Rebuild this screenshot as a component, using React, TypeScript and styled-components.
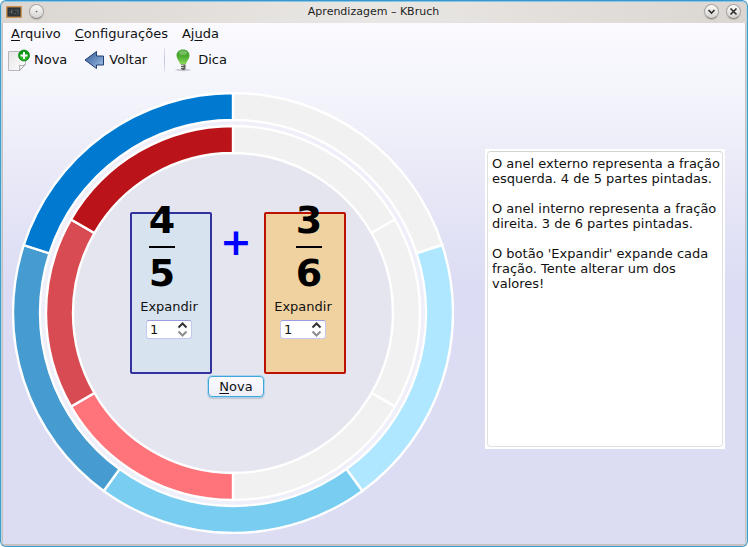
import React, { useId, useState } from "react";
import styled, { createGlobalStyle } from "styled-components";

const GlobalStyle = createGlobalStyle`
  * { box-sizing: border-box; }
  body {
    margin: 0;
    background: #fff;
    color: #111;
    font: 13px/16px "DejaVu Sans", sans-serif;
  }
  button, input, textarea { font: inherit; color: inherit; margin: 0; }
`;

const Frame = styled.div`
  min-height: 100vh;
  display: flex;
  border: 1px solid #3f9fcc;
  border-top-color: #3b97cb;
  border-radius: 6px;
  background: #c6c1c0;
  overflow: hidden;
`;

const Window = styled.div`
  flex: 1;
  display: flex;
  flex-direction: column;
  border: 1px solid #b9d5e3;
  border-width: 1px 1px 0 1px;
  border-top-color: #86c8ea;
  border-radius: 5px;
  padding: 0 1px 2px 1px;
  background: #c6c1c0;
`;

const TitleBar = styled.header`
  display: grid;
  grid-template-columns: 1fr auto 1fr;
  align-items: center;
  height: 21px;
  margin: 0 -1px;
  padding: 0 5px 2px 4px;
  border-radius: 4px 4px 0 0;
  background: linear-gradient(90deg, #dbd6d2, #e9e7e4 50%, #dbd6d2);
`;

const Title = styled.h1`
  margin: 0;
  font-size: 11px;
  font-weight: 400;
  line-height: 16px;
  color: #221f1e;
`;

const TitleGroup = styled.div<{ $end?: boolean }>`
  display: flex;
  align-items: center;
  gap: 7px;
  justify-content: ${(p) => (p.$end ? "flex-end" : "flex-start")};
`;

const RoundButton = styled.button`
  width: 15px;
  height: 15px;
  padding: 0;
  display: grid;
  place-items: center;
  border: 1px solid #aaa6a3;
  border-bottom-color: #888481;
  border-radius: 50%;
  background: linear-gradient(#fbfbfa, #d6d3d0);
  box-shadow: 0 1px 1px #bcb8b4;
  svg { display: block; }
`;

const Client = styled.div`
  flex: 1;
  background: linear-gradient(#fafaff 0, #f3f3fb 80px, #e8e8f7 160px, #dcdcf4 260px, #dcdcf3 100%);
`;

const MenuBar = styled.nav`
  display: flex;
  gap: 14px;
  padding: 3px 8px;
`;

const MenuItem = styled.button`
  padding: 0;
  border: 0;
  background: none;
  line-height: 16px;
`;

const Mnemonic = styled.span`
  text-decoration: underline 1px;
  text-underline-offset: 2px;
  text-decoration-skip-ink: none;
`;

const ToolBar = styled.div`
  display: flex;
  align-items: center;
  height: 30px;
  padding-left: 5px;
`;

const ToolButton = styled.button`
  display: flex;
  align-items: center;
  gap: 4px;
  padding: 0;
  margin-right: 17px;
  border: 0;
  background: none;
  svg { display: block; }
`;

const Separator = styled.div`
  width: 1px;
  height: 24px;
  margin-right: 7px;
  background: linear-gradient(#e4e4f0, #c3c3e0, #e4e4f0);
`;

const Work = styled.main`
  display: flex;
  align-items: flex-start;
  gap: 31px;
  padding: 17px 20px 9px 9px;
`;

const Stage = styled.section`
  flex: 1;
  display: grid;
  > * { grid-area: 1 / 1; }
`;

const Exercise = styled.div`
  padding: 120px 0 0 118px;
`;

const PanelRow = styled.div`
  display: flex;
  align-items: flex-start;
`;

const Panel = styled.div<{ $line: string; $fill: string }>`
  width: 82px;
  height: 162px;
  border: 2px solid ${(p) => p.$line};
  border-radius: 2px;
  background: ${(p) => p.$fill};
`;

const Fraction = styled.div<{ $indent: number }>`
  display: flex;
  flex-direction: column;
  align-items: center;
  width: 26px;
  margin: -14px 0 6px ${(p) => p.$indent}px;
  color: #000;
  font-size: 38px;
  font-weight: 700;
  line-height: 40px;
`;

const Bar = styled.div`
  width: 26px;
  height: 2px;
  margin: 6px 0 5px;
  background: #000;
`;

const Expand = styled.div`
  display: flex;
  flex-direction: column;
  align-items: center;
  gap: 5px;
  width: 58px;
  margin-left: 8px;
`;

const SpinBox = styled.div`
  display: flex;
  width: 46px;
  height: 19px;
  border: 1px solid #c4c8ee;
  border-top-color: #9d9ce0;
  border-radius: 3px;
  background: #fff;
`;

const SpinInput = styled.input`
  flex: 1;
  min-width: 0;
  padding: 0 0 0 3px;
  border: 0;
  outline: 0;
  background: none;
  appearance: textfield;
  &::-webkit-inner-spin-button { appearance: none; margin: 0; }
`;

const SpinSteps = styled.div`
  display: flex;
  flex-direction: column;
  width: 17px;
  padding: 1px 0;
`;

const StepButton = styled.button`
  flex: 1;
  display: grid;
  place-items: center;
  padding: 0;
  border: 0;
  background: none;
  svg { display: block; }
`;

const Operator = styled.div`
  width: 52px;
  padding: 10px 4px 0 0;
  text-align: center;
  color: #00f;
  font-size: 38px;
  font-weight: 700;
  line-height: 40px;
`;

const ActionRow = styled.div`
  display: flex;
  justify-content: center;
  width: 216px;
  padding: 2px 4px 0 0;
`;

const PushButton = styled.button`
  width: 56px;
  height: 21px;
  padding: 0;
  border: 1px solid #3fa5da;
  border-radius: 4px;
  background: linear-gradient(#fbfbff, #eeeef8);
  box-shadow: 0 0 0 1px #a9d4ec, 0 2px 1px #c2c4d4;
  line-height: 16px;
`;

const Notes = styled.div`
  width: 240px;
  height: 300px;
  margin-top: 57px;
  padding: 2px;
  background: #fff;
`;

const NotesText = styled.textarea`
  display: block;
  width: 100%;
  height: 100%;
  padding: 4px 2px 4px 4px;
  border: 1px solid #e0e0e2;
  border-top-color: #d4d4d6;
  border-radius: 4px;
  outline: 0;
  resize: none;
  overflow: hidden;
  background: #fff;
  line-height: 15px;
`;

const EMPTY = "#f1f1f1";
const OUTER = [EMPTY, "#aee7ff", "#79cdf1", "#469bd0", "#007ad1"];
const INNER = [EMPTY, EMPTY, EMPTY, "#ff737b", "#d94b52", "#ba131a"];
const MID = 221;

function point(radius: number, turn: number) {
  const a = turn * 2 * Math.PI;
  return `${(MID + radius * Math.sin(a)).toFixed(2)} ${(MID - radius * Math.cos(a)).toFixed(2)}`;
}

function Ring({ colors, outer, inner }: { colors: string[]; outer: number; inner: number }) {
  const n = colors.length;
  return (
    <g stroke="#fff" strokeWidth="2.4">
      {colors.map((fill, i) => (
        <path
          key={i}
          fill={fill}
          d={`M${point(outer, i / n)}A${outer} ${outer} 0 0 1 ${point(outer, (i + 1) / n)}L${point(inner, (i + 1) / n)}A${inner} ${inner} 0 0 0 ${point(inner, i / n)}Z`}
        />
      ))}
    </g>
  );
}

function RingChart() {
  return (
    <svg width="442" height="442" viewBox="0 0 442 442" role="img" aria-label="4/5, 3/6">
      <circle cx={MID} cy={MID} r="220" fill="#efeffa" />
      <circle cx={MID} cy={MID} r="160" fill="#e5e5ef" />
      <Ring colors={OUTER} outer={220} inner={193} />
      <Ring colors={INNER} outer={187} inner={160} />
    </svg>
  );
}

function Chevron({ up, color }: { up?: boolean; color: string }) {
  return (
    <svg width="11" height="7" viewBox="0 0 11 7">
      <path d={up ? "M1.5 5.5 5.5 1.5 9.5 5.5" : "M1.5 1.5 5.5 5.5 9.5 1.5"} fill="none" stroke={color} strokeWidth="2" />
    </svg>
  );
}

function AppIcon() {
  return (
    <svg width="16" height="12" viewBox="0 0 16 12">
      <rect x="0.75" y="0.75" width="14.5" height="10.5" fill="#2f3538" stroke="#d0924f" strokeWidth="1.3" />
      <path d="M3 6h2M5.5 4v4M5.5 4h2M5.5 6h1.5M8 7.5h2M9 4h3M12 4v4" fill="none" stroke="#68716f" strokeWidth="0.7" />
    </svg>
  );
}

function NewIcon() {
  return (
    <svg width="22" height="23" viewBox="0 0 22 23">
      <defs>
        <linearGradient id="sheet" x1="0" y1="0" x2="1" y2="1">
          <stop offset="0" stopColor="#e4e4e6" />
          <stop offset="1" stopColor="#fff" />
        </linearGradient>
        <radialGradient id="badge" cy="0.7">
          <stop offset="0" stopColor="#3fca32" />
          <stop offset="1" stopColor="#0a9412" />
        </radialGradient>
      </defs>
      <path d="M0.5 2.5h17v13l-6 6h-11z" fill="url(#sheet)" stroke="#b8b8ba" />
      <path d="M11.5 21.5c.4-1.800.4-3.500-.2-5.200 2 .6 4.300.5 6.200-.8z" fill="#fdfdfd" stroke="#a2a2a5" strokeLinejoin="round" />
      <circle cx="16" cy="6.5" r="5.5" fill="url(#badge)" stroke="#0a8a14" strokeWidth="0.8" />
      <path d="M16 3v7M12.5 6.5h7" stroke="#fff" strokeWidth="2" />
    </svg>
  );
}

function BackIcon() {
  return (
    <svg width="21" height="20" viewBox="0 0 21 20">
      <defs>
        <linearGradient id="arrow" x1="0" y1="0" x2="1" y2="1">
          <stop offset="0" stopColor="#33588f" />
          <stop offset="0.55" stopColor="#6b90c2" />
          <stop offset="1" stopColor="#aac6e8" />
        </linearGradient>
      </defs>
      <path d="M1 10 12.5 1.5V6H19.5V15H12.5V18.500Z" fill="url(#arrow)" stroke="#203f73" strokeLinejoin="round" />
    </svg>
  );
}

function HintIcon() {
  return (
    <svg width="22" height="24" viewBox="0 0 22 24">
      <defs>
        <linearGradient id="bulb" x1="0" y1="0" x2="0" y2="1">
          <stop offset="0" stopColor="#3f9a2c" />
          <stop offset="0.5" stopColor="#4fae31" />
          <stop offset="1" stopColor="#8fdc5c" />
        </linearGradient>
      </defs>
      <ellipse cx="11" cy="22" rx="8" ry="1.2" fill="#c9c9cf" />
      <path d="M11 1.500c-4 0-6.500 2.700-6.500 6 0 3.300 2.700 5.500 3.900 9h5.200c1.200-3.500 3.900-5.700 3.900-9 0-3.300-2.500-6-6.500-6z" fill="url(#bulb)" />
      <ellipse cx="11" cy="4.500" rx="4" ry="2.300" fill="#b5dfa5" opacity="0.45" />
      <path d="M9 16.500h4.500v4l-1.200 1.500h-2l-1.300-1.500z" fill="#5e5e5c" />
      <path d="M9 17.500h2.500M9 19.500h2.500" stroke="#d7d5cc" />
    </svg>
  );
}

interface Operand {
  top: number;
  bottom: number;
  line: string;
  fill: string;
  indent: number;
}

function FractionPanel({ top, bottom, line, fill, indent }: Operand) {
  const id = useId();
  const [value, setValue] = useState(1);
  return (
    <Panel $line={line} $fill={fill}>
      <Fraction $indent={indent}>
        <span>{top}</span>
        <Bar />
        <span>{bottom}</span>
      </Fraction>
      <Expand>
        <label htmlFor={id}>Expandir</label>
        <SpinBox>
          <SpinInput id={id} type="number" min={1} value={value} onChange={(e) => setValue(Math.max(1, Number(e.target.value)))} />
          <SpinSteps>
            <StepButton type="button" aria-label="+" onClick={() => setValue(value + 1)}>
              <Chevron up color="#333" />
            </StepButton>
            <StepButton type="button" aria-label="-" onClick={() => setValue(Math.max(1, value - 1))}>
              <Chevron color="#8c8c90" />
            </StepButton>
          </SpinSteps>
        </SpinBox>
      </Expand>
    </Panel>
  );
}

const HELP = `O anel externo representa a fração esquerda. 4 de 5 partes pintadas.

O anel interno representa a fração direita. 3 de 6 partes pintadas.

O botão 'Expandir' expande cada fração. Tente alterar um dos valores!`;

export default function App() {
  return (
    <>
      <GlobalStyle />
      <Frame>
        <Window>
          <TitleBar>
            <TitleGroup>
              <AppIcon />
              <RoundButton type="button" aria-label="Fixar">
                <svg width="3" height="3" viewBox="0 0 3 3"><circle cx="1.5" cy="1.5" r="0.8" fill="#555" /></svg>
              </RoundButton>
            </TitleGroup>
            <Title>Aprendizagem – KBruch</Title>
            <TitleGroup $end>
              <RoundButton type="button" aria-label="Minimizar">
                <svg width="9" height="9" viewBox="0 0 9 9"><path d="M1.5 3 4.5 6 7.5 3" fill="none" stroke="#2e2c2b" strokeWidth="1.6" /></svg>
              </RoundButton>
              <RoundButton type="button" aria-label="Fechar">
                <svg width="9" height="9" viewBox="0 0 9 9"><path d="M1.5 1.5l6 6M7.5 1.5l-6 6" stroke="#2e2c2b" strokeWidth="1.6" /></svg>
              </RoundButton>
            </TitleGroup>
          </TitleBar>
          <Client>
            <MenuBar>
              <MenuItem type="button"><Mnemonic>A</Mnemonic>rquivo</MenuItem>
              <MenuItem type="button"><Mnemonic>C</Mnemonic>onfigurações</MenuItem>
              <MenuItem type="button">Aj<Mnemonic>u</Mnemonic>da</MenuItem>
            </MenuBar>
            <ToolBar>
              <ToolButton type="button"><NewIcon />Nova</ToolButton>
              <ToolButton type="button"><BackIcon />Voltar</ToolButton>
              <Separator />
              <ToolButton type="button"><HintIcon />Dica</ToolButton>
            </ToolBar>
            <Work>
              <Stage>
                <RingChart />
                <Exercise>
                  <PanelRow>
                    <FractionPanel top={4} bottom={5} line="#32329e" fill="#d7e3ef" indent={17} />
                    <Operator>+</Operator>
                    <FractionPanel top={3} bottom={6} line="#bd1100" fill="#f0d2a0" indent={30} />
                  </PanelRow>
                  <ActionRow>
                    <PushButton type="button"><Mnemonic>N</Mnemonic>ova</PushButton>
                  </ActionRow>
                </Exercise>
              </Stage>
              <Notes>
                <NotesText readOnly aria-label="Explicação" value={HELP} />
              </Notes>
            </Work>
          </Client>
        </Window>
      </Frame>
    </>
  );
}
